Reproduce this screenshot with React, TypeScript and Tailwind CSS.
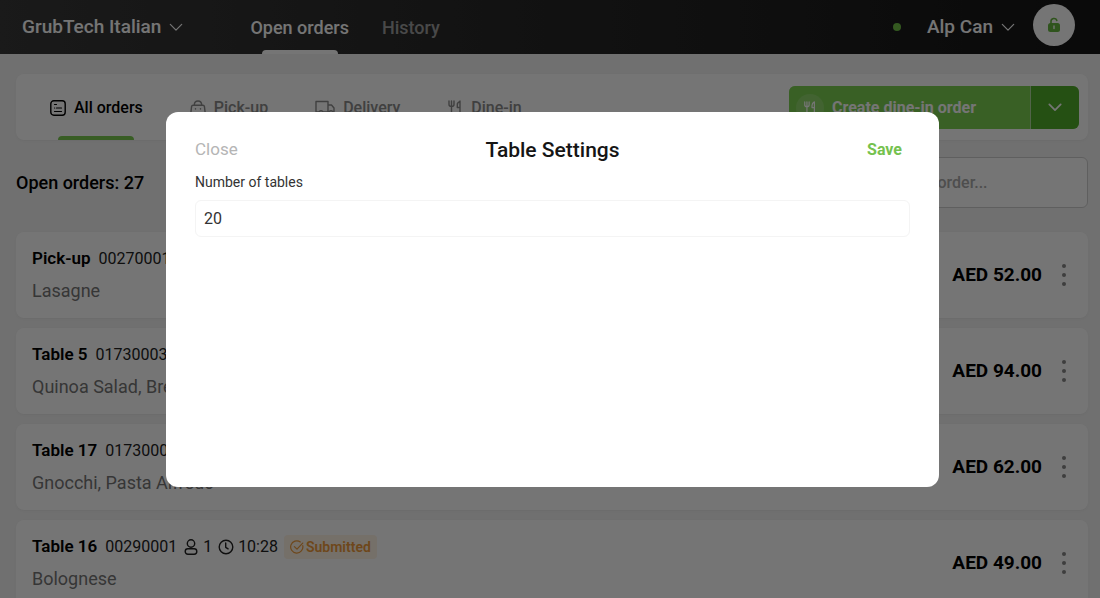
import { useState } from "react";
import type { ReactNode } from "react";

type IconProps = { className?: string };

function Glyph({ className = "size-4", children }: IconProps & { children: ReactNode }) {
  return (
    <svg
      viewBox="0 0 16 16"
      fill="none"
      stroke="currentColor"
      strokeWidth="1.4"
      strokeLinecap="round"
      strokeLinejoin="round"
      aria-hidden="true"
      className={"shrink-0 " + className}
    >
      {children}
    </svg>
  );
}

const Chevron = ({ className }: IconProps) => (
  <Glyph className={className}><path d="M1.500 5l6.500 6.500L14.500 5" /></Glyph>
);

const ListIcon = () => (
  <Glyph className="size-4">
    <rect x="0.8" y="0.8" width="14.4" height="14.4" rx="3" />
    <path d="M4.500 4.500h2M6.500 8h5M4.500 8h.2M4.500 11.500h7" strokeWidth="1.200" />
  </Glyph>
);

const BagIcon = () => (
  <Glyph className="size-4">
    <path d="M3 5.200h10q1.200 0 1.400 1.200l1 8.600H.600l1-8.600Q1.800 5.200 3 5.200zM4.300 5.200C4.300 2.600 5.700 1 8 1s3.700 1.600 3.700 4.200M5.500 8.600v.4M10.500 8.600v.4" />
  </Glyph>
);

const TruckIcon = () => (
  <svg viewBox="0 0 20 16" fill="none" stroke="currentColor" strokeWidth="1.4" strokeLinejoin="round" aria-hidden="true" className="h-4 w-5 shrink-0">
    <path d="M4 12H1V1.500h12V12H8M13 5h3.500L19 8v4h-1M13 12h1" />
    <circle cx="6" cy="12.500" r="1.800" />
    <circle cx="16" cy="12.500" r="1.800" />
  </svg>
);

const ForkIcon = ({ className }: IconProps) => (
  <Glyph className={className}>
    <path d="M2 1v3.500Q2 6.500 4.500 6.500T7 4.500V1M4.500 1v14M13 15V1Q10.300 2.500 10.300 5v2.500H13" />
  </Glyph>
);

const PersonIcon = () => (
  <Glyph className="size-4">
    <circle cx="8" cy="4.500" r="3.700" />
    <rect x="2.200" y="9.800" width="11.600" height="5.400" rx="2.700" />
  </Glyph>
);

const ClockIcon = () => (
  <Glyph className="size-4">
    <circle cx="8" cy="8" r="6.800" />
    <path d="M7.700 4v4.300l2.400 1.500" />
  </Glyph>
);

const SubmittedIcon = () => (
  <Glyph className="size-3.5">
    <path d="M14.600 6.500A7 7 0 1 1 11.800 2.200M5 7.500l3 3 6.500-7" />
  </Glyph>
);

const LockIcon = () => (
  <svg viewBox="0 0 14 16" aria-hidden="true" className="h-4 w-3.5">
    <path d="M4 7V4.500a3 3 0 0 1 5.800-1.100" fill="none" stroke="currentColor" strokeWidth="1.600" strokeLinecap="round" />
    <rect x="1" y="6" width="12" height="9" rx="2.500" fill="currentColor" />
    <path d="M7 9v2.600" stroke="#fff" strokeWidth="1.400" strokeLinecap="round" />
  </svg>
);

const filters = [
  { label: "Pick-up", icon: <BagIcon /> },
  { label: "Delivery", icon: <TruckIcon /> },
  { label: "Dine-in", icon: <ForkIcon className="size-4" /> },
];

type Order = { title: string; id: string; items: string; price: string; guests?: string; time?: string };

const orders: Order[] = [
  { title: "Pick-up", id: "00270001", items: "Lasagne", price: "AED 52.00" },
  { title: "Table 5", id: "01730003", items: "Quinoa Salad, Bread", price: "AED 94.00" },
  { title: "Table 17", id: "01730002", items: "Gnocchi, Pasta Alfredo", price: "AED 62.00" },
  { title: "Table 16", id: "00290001", items: "Bolognese", price: "AED 49.00", guests: "1", time: "10:28" },
];

function Header() {
  return (
    <header className="flex h-[54px] items-center bg-linear-to-r from-[#393939] to-[#161616] pr-[25px] pl-[22px] text-white">
      <button className="flex items-center gap-2 text-[19px] font-medium whitespace-nowrap">
        GrubTech Italian <Chevron className="size-3.5" />
      </button>
      <nav className="ml-[67px] flex h-full gap-[33px] text-lg font-medium">
        <a href="#open" className="flex h-full flex-col items-center justify-between">
          <span className="pt-3.5 leading-7">Open orders</span>
          <span className="h-1 w-[76px] rounded-t bg-white" />
        </a>
        <a href="#history" className="pt-3.5 leading-7 text-[#a0a0a0]">History</a>
      </nav>
      <span className="mr-[26px] ml-auto size-2 rounded-full bg-[#71c346]" />
      <button className="mr-[18px] flex items-center gap-2 text-[19px] font-medium">
        Alp Can <Chevron className="size-3.5" />
      </button>
      <button aria-label="Unlock" className="mt-1 flex size-[42px] items-center justify-center self-start rounded-full bg-white text-[#68b73f]">
        <LockIcon />
      </button>
    </header>
  );
}

function OrderCard({ order }: { order: Order }) {
  return (
    <li className="flex h-[86px] items-center rounded-lg bg-white pr-3.5 pl-4 shadow-sm shadow-black/3">
      <div className="min-w-0 flex-1">
        <div className="flex h-8 items-center gap-1.5 text-[#222]">
          <h2 className="mr-0.5 text-[17px] font-semibold text-black">{order.title}</h2>
          <span>{order.id}</span>
          {order.guests && (
            <>
              <span className="flex items-center gap-1"><PersonIcon />{order.guests}</span>
              <span className="flex items-center gap-1"><ClockIcon />{order.time}</span>
              <span className="flex items-center gap-0.5 rounded bg-[#fff3e5] px-1.5 py-0.5 text-sm font-semibold text-[#ef9c3c]">
                <SubmittedIcon />Submitted
              </span>
            </>
          )}
        </div>
        <p className="text-lg leading-8 text-[#777]">{order.items}</p>
      </div>
      <span className="text-[19px] font-bold text-black">{order.price}</span>
      <button aria-label={"Options for " + order.title} className="ml-3 flex w-5 flex-col items-center gap-[5px] py-1">
        <span className="size-1 rounded-full bg-[#888]" />
        <span className="size-1 rounded-full bg-[#888]" />
        <span className="size-1 rounded-full bg-[#888]" />
      </button>
    </li>
  );
}

export default function App() {
  const [tables, setTables] = useState("20");
  return (
    <div className="h-screen overflow-hidden bg-[#f3f3f3] font-['Roboto',sans-serif]">
      <Header />
      <main className="pt-5 pr-3 pl-4">
        <section className="flex h-[66px] items-center rounded-lg bg-white pr-[9px] pl-[34px] shadow-sm shadow-black/3">
          <div className="flex h-full items-center gap-[47px] font-medium">
            <button className="flex h-full flex-col items-center justify-between text-black">
              <span className="flex items-center gap-2 pt-[22px]"><ListIcon />All orders</span>
              <span className="h-1 w-[76px] rounded-t bg-[#7acb50]" />
            </button>
            {filters.map((f) => (
              <button key={f.label} className="flex items-center gap-2 pt-0.5 text-[#8c8c8c]">
                {f.icon}{f.label}
              </button>
            ))}
          </div>
          <div className="ml-auto flex h-[43px] gap-px overflow-hidden rounded-md bg-[#b4d99f] text-white">
            <button className="flex w-[241px] items-center gap-2 bg-[#7dd252] pt-0.5 pl-[7px] font-bold">
              <span className="flex size-7 items-center justify-center rounded-full bg-white/15"><ForkIcon className="size-3.5" /></span>
              Create dine-in order
            </button>
            <button aria-label="More order types" className="flex w-12 items-center justify-center bg-[#52af2a]">
              <Chevron className="size-3.5 stroke-2" />
            </button>
          </div>
        </section>
        <div className="mt-[17px] flex items-center justify-between">
          <h1 className="text-lg font-medium text-black">Open orders: 27</h1>
          <input
            aria-label="Search for an order"
            placeholder="Search for an order..."
            className="h-[51px] w-[300px] rounded-md border border-[#d0d0d0] bg-white pl-[49px] text-base font-medium placeholder:text-[#aaa]"
          />
        </div>
        <ul className="mt-6 flex flex-col gap-2.5">
          {orders.map((o) => <OrderCard key={o.title} order={o} />)}
        </ul>
      </main>
      <div className="fixed inset-0 bg-black/54" />
      <div role="dialog" aria-modal="true" aria-labelledby="dialog-title" className="fixed top-28 right-[161px] left-[166px] h-[375px] rounded-xl bg-white px-[29px] pt-6">
        <div className="grid grid-cols-3 items-center">
          <button className="justify-self-start text-[17px] text-[#b5b5b5]">Close</button>
          <h2 id="dialog-title" className="justify-self-center text-[21px] leading-7 font-medium whitespace-nowrap text-[#151515]">Table Settings</h2>
          <button className="mr-2 justify-self-end font-bold text-[#75c24e]">Save</button>
        </div>
        <label htmlFor="tables" className="mt-2 block text-sm text-[#333]">Number of tables</label>
        <input
          id="tables"
          inputMode="numeric"
          value={tables}
          onChange={(e) => setTables(e.target.value)}
          className="mt-2 block h-[37px] w-full rounded-md border border-[#f4f4f4] px-2 text-base text-[#333] outline-none"
        />
      </div>
    </div>
  );
}
